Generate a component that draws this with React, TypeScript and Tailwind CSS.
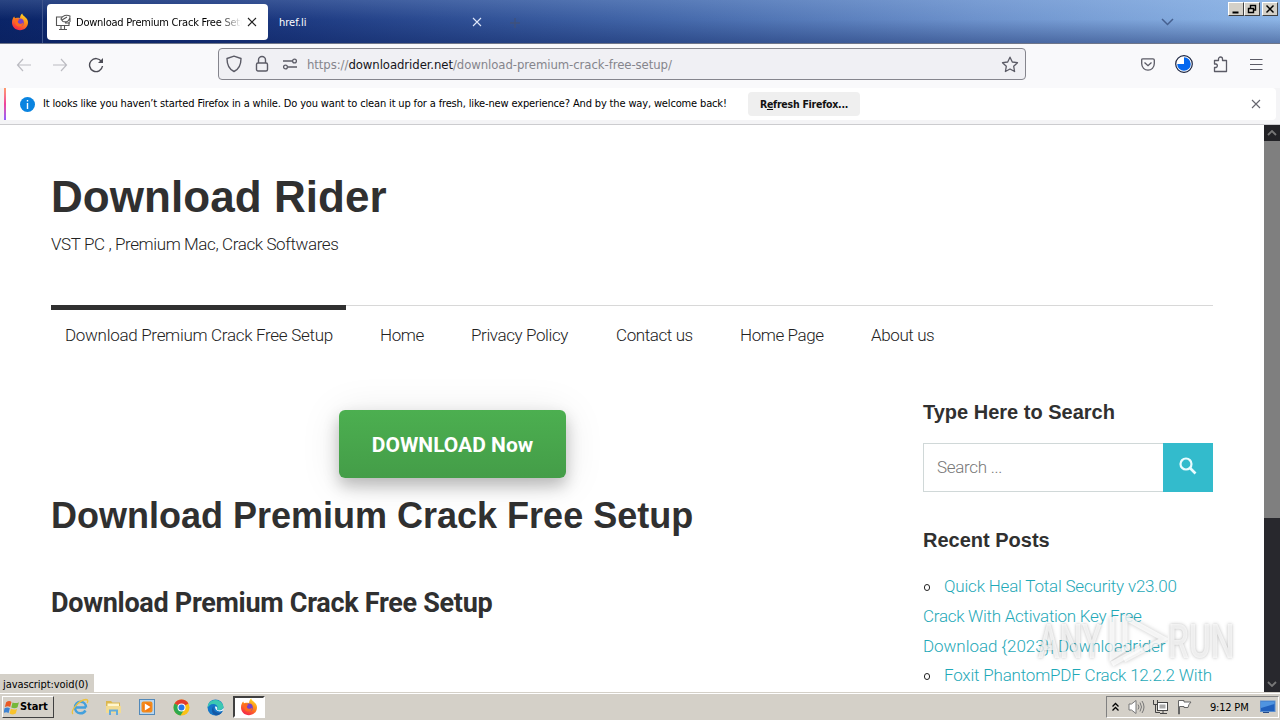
import React from 'react';

const navItems = [
  { label: 'Home', box: 'w-[91px]' },
  { label: 'Privacy Policy', box: 'w-[145px]' },
  { label: 'Contact us', box: 'w-[124px]' },
  { label: 'Home Page', box: 'w-[131px]' },
  { label: 'About us', box: 'w-[90px]' },
];

const FirefoxLogo = () => (
  <svg width="18" height="18" viewBox="0 0 18 18">
    <defs>
      <linearGradient id="ff" x1="0.8" y1="0" x2="0.3" y2="1">
        <stop offset="0" stopColor="#ffe226" />
        <stop offset="0.45" stopColor="#ff8a16" />
        <stop offset="1" stopColor="#f5214b" />
      </linearGradient>
    </defs>
    <path d="M9 17.2C4.400 17.200 1 13.800 1 9.500C1 6.800 2 4.800 3.200 3.600L4 5.200L5.800 4.800C7 4.500 8 4.600 9 5C9.200 3 10 1.500 11.200.6C11.500 2.500 13.500 3.300 14.500 4.600C16.200 6 17 7.700 17 9.500C17 13.800 13.600 17.200 9 17.200Z" fill="url(#ff)" />
    <circle cx="9" cy="9.400" r="3.800" fill="#7542c9" />
    <path d="M4 6C5.500 5 7.500 5.500 8.500 7C7.500 7.200 6.500 8 7 9.500C8 11.500 11 11 12.300 9.500C12 13 9.500 14 7.500 13.500C4.500 12.800 3.200 9 4 6Z" fill="#ff6a1f" />
  </svg>
);

const CloseX = ({ color, size }: { color: string; size: number }) => (
  <svg className="shrink-0" width={size} height={size} viewBox="0 0 10 10" fill="none" stroke={color} strokeWidth="1.1">
    <path d="M1 1L9 9M9 1L1 9" />
  </svg>
);

const TabBar = () => (
  <div className="flex h-11 items-start border-b border-[#6f7689] bg-[linear-gradient(180deg,rgba(170,200,240,0.2),rgba(0,0,50,0)_45%,rgba(10,30,90,0.4)),linear-gradient(100deg,#0a2467_0%,#17327a_18%,#2c4c92_34%,#4468aa_52%,#6d92cc_76%,#8db5e6_100%)]">
    <div className="flex h-[43px] w-[43px] items-center justify-center border-r border-[#3f558c] pr-0.5">
      <FirefoxLogo />
    </div>
    <div className="mt-1 ml-1 flex h-9 w-[221px] items-center rounded bg-white pl-2">
      <svg width="17" height="17" viewBox="0 0 17 17" fill="none" stroke="#555" strokeWidth="1.1">
        <path d="M7 3H1.500V11.500H14V8M4 15.500H12M6 12V15M9.500 12V15" />
        <path d="M6 5C7 1 12 .5 15 2C15.500 6 12 9 8 7.500ZM7 6L12 3M15 4V8M10 9H15" />
      </svg>
      <div className="mr-[5px] ml-1 w-[166px] overflow-hidden pt-[3px] whitespace-nowrap text-[11px] tracking-[-0.23px] [mask-image:linear-gradient(90deg,#000_86%,transparent_100%)]">
        Download Premium Crack Free Setup
      </div>
      <CloseX color="#222" size={10} />
    </div>
    <div className="flex h-11 w-[214px] items-center pl-[11px]">
      <span className="w-[193px] pt-[3px] text-[11px] text-white">href.li</span>
      <CloseX color="#dfe8fa" size={10} />
    </div>
    <svg className="mt-[17px] ml-[27px]" width="12" height="12" viewBox="0 0 12 12" stroke="#3f527c" strokeWidth="1.300">
      <path d="M6 1V11M1 6H11" />
    </svg>
    <svg className="mt-[18px] ml-[640px]" width="13" height="8" viewBox="0 0 13 8" fill="none" stroke="#46608f" strokeWidth="1.500">
      <path d="M1 1L6.500 6.500L12 1" />
    </svg>
    <div className="mt-0.5 ml-auto flex pr-[2px]">
      {['min', 'max', 'close'].map((kind) => (
        <div
          key={kind}
          className={`flex h-[14px] w-4 items-center justify-center border border-t-white border-r-[#404040] border-b-[#404040] border-l-white bg-[#d4d0c8] ${kind === 'close' ? 'ml-0.5' : ''}`}
        >
          <svg width="10" height="10" viewBox="0 0 10 10" fill="none" stroke="#000" strokeWidth="1.500">
            {kind === 'min' && <path d="M1.500 8.500H7.500" strokeWidth="2" />}
            {kind === 'max' && <path d="M3.500 4V1.500H8.500V6H6.500M1.500 4.500H6.500V8.500H1.500Z" strokeWidth="1.400" />}
            {kind === 'close' && <path d="M1.500 1.500L8.500 8.500M8.500 1.500L1.500 8.500" />}
          </svg>
        </div>
      ))}
    </div>
  </div>
);

const Toolbar = () => (
  <div className="flex h-11 items-center bg-[#f9f9fb] pb-1">
    <div className="flex w-[218px] items-center gap-[21px] pt-px pl-4">
      <svg width="16" height="14" viewBox="0 0 16 14" fill="none" stroke="#bcbcc2" strokeWidth="1.200">
        <path d="M15 7H1.500M7 1L1.500 7L7 13" />
      </svg>
      <svg className="-ml-px" width="16" height="14" viewBox="0 0 16 14" fill="none" stroke="#bcbcc2" strokeWidth="1.200">
        <path d="M1 7H14.500M9 1L14.500 7L9 13" />
      </svg>
      <svg className="-ml-px" width="16" height="16" viewBox="0 0 16 16" fill="none" stroke="#4c4c55" strokeWidth="1.400">
        <path d="M13.500 4.500A6.500 6.500 0 1 0 14.500 9" />
        <path d="M15 1V6H10Z" fill="#4c4c55" stroke="none" />
      </svg>
    </div>
    <div className="flex h-8 w-[808px] items-center rounded border border-[#85858d] bg-[#f0f0f4] pl-[7px]">
      <svg width="16" height="18" viewBox="0 0 16 18" fill="none" stroke="#5b5b66" strokeWidth="1.400" strokeLinejoin="round">
        <path d="M8 1.200L15 3.500C15 9.500 13.500 14 8 16.500C2.500 14 1 9.500 1 3.500Z" />
      </svg>
      <svg className="ml-[13px]" width="14" height="18" viewBox="0 0 14 18" fill="none" stroke="#5b5b66" strokeWidth="1.400">
        <rect x="1.500" y="8" width="11" height="8" rx="1.500" />
        <path d="M3.500 8V5A3.500 3.500 0 0 1 10.500 5V8" />
      </svg>
      <svg className="ml-[13px]" width="16" height="12" viewBox="0 0 16 12" fill="none" stroke="#5b5b66" strokeWidth="1.300">
        <path d="M1 3H10M6 9H15" />
        <circle cx="12.500" cy="3" r="1.900" />
        <circle cx="3.500" cy="9" r="1.900" />
      </svg>
      <div className="ml-[9px] w-[694px] pt-0.5 whitespace-nowrap text-[13px] tracking-[-0.07px] text-[#85858c]">
        https://<span className="text-[#15141a]">downloadrider.net</span>/download-premium-crack-free-setup/
      </div>
      <svg className="shrink-0" width="18" height="17" viewBox="0 0 18 17" fill="none" stroke="#5b5b66" strokeWidth="1.300" strokeLinejoin="round">
        <path d="M9 1.200L11.300 6L16.500 6.700L12.700 10.300L13.600 15.500L9 13L4.400 15.500L5.300 10.300L1.500 6.700L6.700 6Z" />
      </svg>
    </div>
    <div className="ml-auto flex items-center pr-[17px]">
      <svg width="14" height="13" viewBox="0 0 14 13" fill="none" stroke="#5b5b66" strokeWidth="1.300">
        <path d="M2 .8H12Q13.300.8 13.300 2V5.500C13.300 9.500 10.500 12.200 7 12.200S.7 9.500.7 5.500V2Q.7.8 2 .8ZM3.500 4.500L7 7.700L10.500 4.500" />
      </svg>
      <svg className="ml-[20px]" width="18" height="18" viewBox="0 0 18 18">
        <circle cx="9" cy="9" r="8.300" fill="#fff" stroke="#1b2440" strokeWidth="1.200" />
        <path d="M9 9V2.200A6.800 6.800 0 1 1 2.200 9Z" fill="#0568f0" />
      </svg>
      <svg className="ml-[20px]" width="16" height="17" viewBox="0 0 16 17" fill="none" stroke="#5b5b66" strokeWidth="1.300" strokeLinejoin="round">
        <path d="M1.500 4.500H5.500V3A2 2 0 0 1 9.500 3V4.500H13.500V15.500H1.500V11.500H3A1.800 1.800 0 0 0 3 8H1.500Z" />
      </svg>
      <svg className="ml-[21px]" width="13" height="11" viewBox="0 0 13 11" stroke="#5b5b66" strokeWidth="1.200">
        <path d="M0 .5H12.500M0 5.500H12.500M0 10.500H12.500" />
      </svg>
    </div>
  </div>
);

const InfoBar = () => (
  <div className="flex h-[37px] items-start border-b border-[#cccccf] bg-[#f4f4f6] pr-1 pl-1">
    <div className="flex h-8 w-full items-center rounded-r bg-white">
      <div className="h-8 w-0.5 bg-gradient-to-b from-[#ff9a6a] via-[#f0409a] to-[#9059ff]" />
      <div className="ml-[14px] flex h-[15px] w-[15px] items-center justify-center rounded-full bg-[#0a84e0]">
        <svg width="3" height="9" viewBox="0 0 3 9" fill="#fff">
          <path d="M.8 0H2.200V1.500H.8ZM.8 3H2.200V9H.8Z" />
        </svg>
      </div>
      <span className="ml-2 w-[705px] whitespace-nowrap text-[11px] tracking-[-0.15px] text-black">
        It looks like you haven’t started Firefox in a while. Do you want to clean it up for a fresh, like-new experience? And by the way, welcome back!
      </span>
      <button className="h-6 w-[112px] rounded bg-[#efefef] pt-px text-[10.500px] font-bold tracking-[-0.25px] whitespace-nowrap text-[#111]">
        R<span className="underline">e</span>fresh Firefox...
      </button>
      <div className="mr-[15px] ml-auto">
        <CloseX color="#66666f" size={10} />
      </div>
    </div>
  </div>
);

const Bullet = () => <span className="mr-[14px] ml-px inline-block h-[7px] w-[6px] rounded-full border border-[#222] align-middle" />;

const Page = () => (
  <div className="h-[567px] w-[1264px] overflow-hidden bg-white pr-[51px] pl-[51px] font-['Roboto','Liberation_Sans',sans-serif] text-[#303030]">
    <h1 className="mt-[46px] h-[52px] font-['Liberation_Sans',sans-serif] text-[44px] leading-[52px] font-bold tracking-[0.05px]">Download Rider</h1>
    <p className="mt-[9px] h-6 text-[17px] leading-6 font-light tracking-[-0.4px] text-[#222]">VST PC , Premium Mac, Crack Softwares</p>
    <nav className="mt-[49px] flex h-[60px] border-t border-[#d8d8d8] text-[17px] leading-[58px] font-light tracking-[-0.3px] whitespace-nowrap text-[#222]">
      <a className="-mt-px mr-[34px] flex w-[295px] border-t-[5px] border-[#303030] pl-[14px] leading-[50px]">Download Premium Crack Free Setup</a>
      {navItems.map((item) => (
        <a key={item.label} className={`${item.box} shrink-0 tracking-[-0.4px]`}>{item.label}</a>
      ))}
    </nav>
    <div className="flex justify-between">
      <main className="flex w-[803px] flex-col pt-[45px]">
        <button className="relative h-[68px] w-[227px] self-center rounded-md bg-gradient-to-b from-[#4caf50] to-[#449d48] pt-[3px] text-[21px] font-bold whitespace-nowrap text-white shadow-[0_8px_16px_rgba(0,0,0,0.24),0_4px_40px_rgba(0,0,0,0.1)]">
          DOWNLOAD Now
        </button>
        <h2 className="mt-[16px] h-11 font-['Liberation_Sans',sans-serif] text-[36px] leading-[44px] font-bold whitespace-nowrap">Download Premium Crack Free Setup</h2>
        <h3 className="mt-[47px] h-9 text-[27px] leading-9 font-bold tracking-[-0.3px] whitespace-nowrap">Download Premium Crack Free Setup</h3>
      </main>
      <aside className="w-[290px] pt-[34px]">
        <h4 className="h-[26px] font-['Liberation_Sans',sans-serif] text-[20px] leading-[26px] font-bold">Type Here to Search</h4>
        <div className="mt-[18px] flex h-[49px]">
          <div className="flex w-[240px] items-center border border-r-0 border-[#d0d8d8] pl-[13px] text-[17px] font-light tracking-[-0.3px] text-[#777]">Search ...</div>
          <div className="flex w-[50px] items-center justify-center bg-[#33bbcc] pb-1">
            <svg width="18" height="18" viewBox="0 0 18 18" fill="none" stroke="#eafcff" strokeWidth="2.200">
              <circle cx="7" cy="7" r="5.500" />
              <path d="M11 11L16.500 16.500" strokeWidth="2.600" />
            </svg>
          </div>
        </div>
        <h4 className="mt-[35px] h-[26px] font-['Liberation_Sans',sans-serif] text-[20px] leading-[26px] font-bold">Recent Posts</h4>
        <ul className="mt-[19px] text-[17px] leading-[29.800px] font-light tracking-[-0.2px] whitespace-nowrap text-[#1fa9b8]">
          <li><Bullet /><span>Quick Heal Total Security v23.00</span></li>
          <li className="tracking-[-0.28px]">Crack With Activation Key Free</li>
          <li className="tracking-[-0.05px]">Download {'{2023}'}| Downloadrider</li>
          <li><Bullet /><span>Foxit PhantomPDF Crack 12.2.2 With</span></li>
        </ul>
      </aside>
    </div>
  </div>
);

const Scrollbar = () => (
  <div className="flex h-[567px] w-4 flex-col bg-[#28282d]">
    <div className="flex h-4 items-center justify-center bg-[#222226]">
      <svg width="10" height="6" viewBox="0 0 10 6" fill="none" stroke="#777" strokeWidth="1.800"><path d="M1 5L5 1L9 5" /></svg>
    </div>
    <div className="h-[377px] bg-[#7f7f7f]" />
    <div className="mt-auto flex h-4 items-center justify-center">
      <svg width="10" height="6" viewBox="0 0 10 6" fill="none" stroke="#777" strokeWidth="1.800"><path d="M1 1L5 5L9 1" /></svg>
    </div>
  </div>
);

const Taskbar = () => (
  <div className="flex h-7 items-center border-t border-[#d4d0c8] bg-[#d4d0c8] pt-px shadow-[inset_0_1px_0_#fff]">
    <div className="ml-0.5 flex h-[22px] w-[52px] items-center border border-t-white border-r-[#404040] border-b-[#404040] border-l-white pl-px">
      <svg className="shrink-0" width="16" height="15" viewBox="0 0 15 14">
        <path d="M2 2C4 .5 6 .8 7 1.800L5.800 6.500C4.500 5.500 2.500 5.600.8 6.600Z" fill="#ea5a24" />
        <path d="M8 2.200C10 3.200 12.500 3 14 2L12.700 6.800C11 8 8.500 7.800 6.800 6.900Z" fill="#75b83b" />
        <path d="M.5 7.800C2.200 6.600 4 6.800 5.500 7.700L4.200 12.300C3 11.300 1.200 11.300-.5 12.300Z" fill="#3d83d2" />
        <path d="M6.500 8.200C8.200 9 10.500 9.300 12.300 8.100L11 12.700C9.200 13.900 7 13.500 5.200 12.600Z" fill="#f8c32c" />
      </svg>
      <span className="pt-px text-[11px] font-bold tracking-[-0.1px] text-black">Start</span>
    </div>
    <div className="ml-[17px] flex items-center gap-[16px]">
      <svg width="18" height="18" viewBox="0 0 18 18" fill="none">
        <path d="M15 9.500H4.500M14.500 12.500C13 15 10.800 15.500 9 15.300C6 15 4 12.500 4 9.500C4 6 6.500 3.800 9.500 3.800C12.500 3.800 15 6 15 9.500" stroke="#44a0dc" strokeWidth="2.500" />
        <path d="M2 16C-1 13 8 2 15 1.500C17.500 1.500 17 4 16 5" stroke="#edc23e" strokeWidth="1.300" />
      </svg>
      <svg width="17" height="17" viewBox="0 0 17 17">
        <path d="M1 2H6L7.500 3.500H15V14H1Z" fill="#dcb74e" />
        <path d="M2.500 4.500H14V8H2.500Z" fill="#fff6cf" />
        <path d="M1 7H16V14H1Z" fill="#f2db92" />
        <path d="M4 16V10.500H13V16H11V12.500H6V16Z" fill="#62abdc" />
      </svg>
      <svg className="ml-px" width="17" height="17" viewBox="0 0 17 17">
        <rect x=".5" y=".5" width="15" height="15" fill="#b9d6ef" stroke="#5289b9" />
        <rect x="2.500" y="2.500" width="11" height="11" rx="2" fill="#f28b1c" />
        <circle cx="8" cy="8" r="4.200" fill="#f57a10" />
        <path d="M5.800 4.500L11.500 8L5.800 11.500Z" fill="#fff" />
      </svg>
      <svg className="ml-px" width="17" height="17" viewBox="0 0 17 17">
        <circle cx="8.500" cy="8.500" r="8" fill="#fbc116" />
        <path d="M8.500 8.500L1.600 4.500A8 8 0 0 1 15.400 4.500Z" fill="#e33b2e" />
        <path d="M8.500 8.500L1.600 4.500A8 8 0 0 0 7.500 16.500L11 11Z" fill="#2da94f" />
        <circle cx="8.500" cy="8.500" r="4" fill="#fff" />
        <circle cx="8.500" cy="8.500" r="3" fill="#2878e8" />
      </svg>
      <svg className="ml-px" width="17" height="17" viewBox="0 0 17 17">
        <circle cx="8.500" cy="8.500" r="8" fill="#1476c9" />
        <path d="M1 6C3 0 13-1 16 6C18 11 12 12 10 10.500C11.500 8 10 5.500 7 5C4 4.600 1.500 6.500.6 9Z" fill="#3bc8b2" />
        <path d="M7 7C5 10 8 15 14 13.500C15 13 16 12 16 12C14 15 11 16.500 9 16.500C4 15 4 9 7 7Z" fill="#1458a5" />
        <path d="M8 7.500C10.500 7 10.500 9 10 10.500C11.500 12 15 11.500 16.500 9V11C13 14 8 12 8 7.500Z" fill="#e9faff" />
      </svg>
    </div>
    <div className="ml-[9px] flex h-[22px] w-8 items-center justify-center border-2 border-t-[#404040] border-r-white border-b-white border-l-[#404040] bg-white">
      <FirefoxLogo />
    </div>
    <div className="mr-[1px] ml-auto flex h-[22px] w-[173px] items-center border border-t-[#808080] border-r-white border-b-white border-l-[#808080] pl-[5px]">
      <svg width="7" height="10" viewBox="0 0 7 10" fill="none" stroke="#000" strokeWidth="1.300">
        <path d="M.5 4.500L3.500 1.500L6.500 4.500M.5 8.500L3.500 5.500L6.500 8.500" />
      </svg>
      <svg className="ml-[9px]" width="17" height="16" viewBox="0 0 17 16" fill="none" stroke="#777">
        <path d="M1 5H3.500L8 1.500V14.500L3.500 11H1Z" fill="#fff" />
        <path d="M10 5.500Q12 8 10 10.500M12 3.500Q15 8 12 12.500M14 2Q18 8 14 14" />
      </svg>
      <svg className="ml-[7px]" width="17" height="16" viewBox="0 0 17 16" fill="#fff" stroke="#444">
        <rect x="5.500" y="3.500" width="10" height="8" fill="#fff" />
        <rect x="7.500" y="5.500" width="6" height="4" fill="#aaa" stroke="none" />
        <path d="M1.500 1V5.500H5.500V1M3.500 5.500V13.500H8M8 14.500H15M11 12V14" fill="none" />
      </svg>
      <svg className="ml-[7px]" width="17" height="16" viewBox="0 0 17 16" fill="#fff" stroke="#666">
        <path d="M2.500 15V1.500H8V3H15L13 5.500L12 8.500H8V7.500H3.500V15Z" />
      </svg>
      <span className="ml-[17px] w-[50px] pt-0.5 text-[11px] tracking-[-0.2px] whitespace-nowrap text-black">9:12 PM</span>
      <svg width="16" height="14" viewBox="0 0 16 14">
        <rect x=".5" y="1" width="14.500" height="10.500" fill="#2060bd" stroke="#5c8fce" />
        <path d="M1 1.500H14.500V4L1 8Z" fill="#4f94e0" />
        <path d="M3 12.500H9" stroke="#254a86" />
      </svg>
    </div>
  </div>
);

const Watermark = () => (
  <div className="absolute top-[613px] left-[1038px] flex h-14 w-[200px] items-center font-['Liberation_Sans_Narrow','Roboto',sans-serif] text-[49px] leading-none font-medium text-white/70 [text-shadow:0_0_4px_rgba(100,100,100,0.45)]">
    <span className="w-[68px] origin-left scale-x-[0.66]">ANY</span>
    <svg className="shrink-0" width="62" height="62" viewBox="0 0 62 62" fill="none" stroke="#fff" strokeOpacity="0.75" strokeWidth="5">
      <g className="drop-shadow-[0_0_2px_rgba(110,110,110,0.5)]">
        <path d="M6 7V47L20 38" />
        <path d="M19 6V35M18 7L58 29L18 50" />
        <path d="M6 54L35 38" />
      </g>
    </svg>
    <span className="w-[66px] origin-left scale-x-[0.68]">RUN</span>
  </div>
);

const App = () => {
  return (
    <div className="relative h-[720px] w-[1280px] overflow-hidden bg-white font-['DejaVu_Sans_Condensed','DejaVu_Sans',sans-serif]">
      <TabBar />
      <Toolbar />
      <InfoBar />
      <div className="flex">
        <Page />
        <Scrollbar />
      </div>
      <Taskbar />
      <Watermark />
      {/* link status popup */}
      <div className="absolute top-[674px] left-0 h-[18px] w-[94px] bg-[#d4d0c8] pl-[3px] text-[11px] leading-[21px] tracking-[-0.08px] whitespace-nowrap text-black">
        javascript:void(0)
      </div>
    </div>
  );
};

export default App;
